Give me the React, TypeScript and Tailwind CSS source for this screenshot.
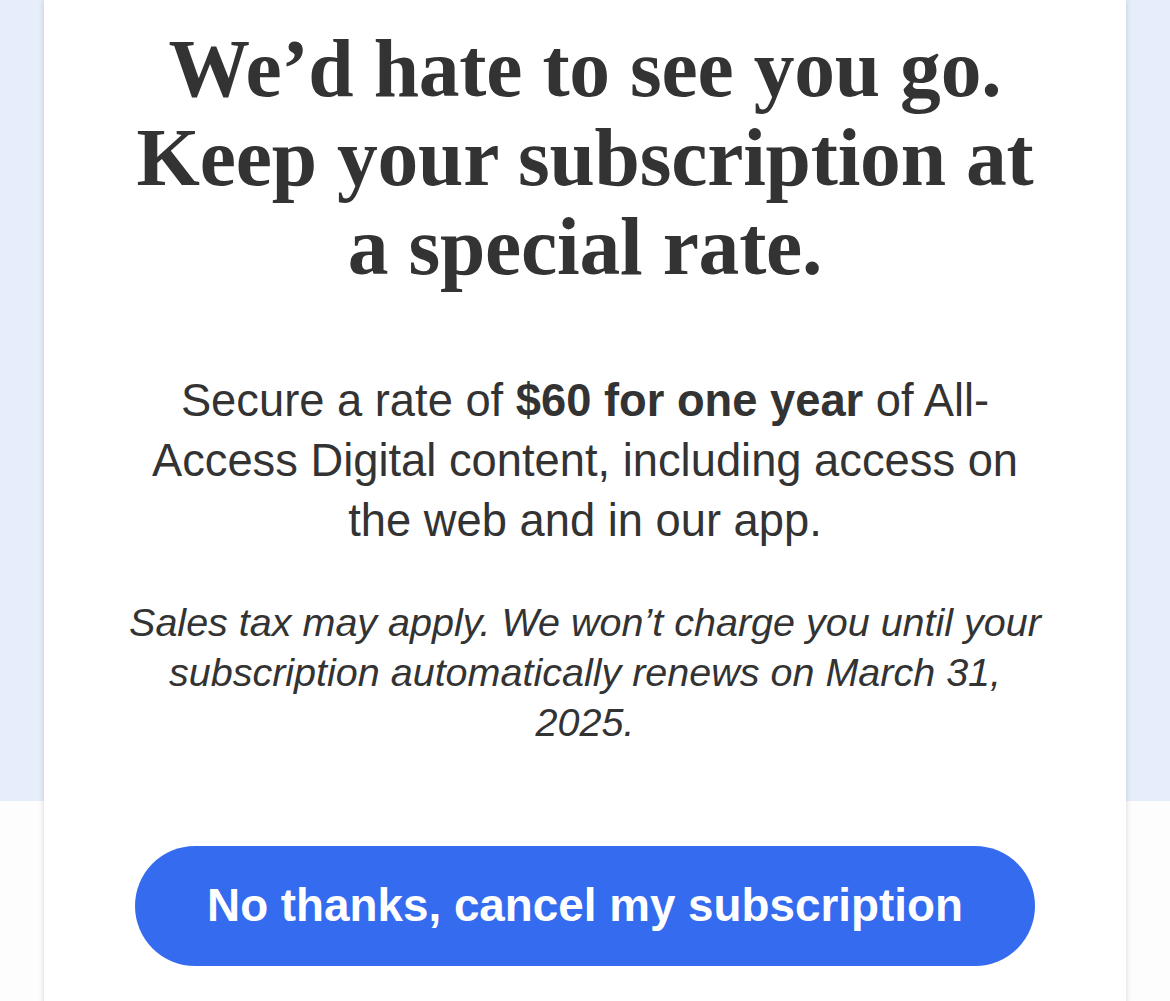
export default function App() {
  return (
    <div className="min-h-[1001px] w-full bg-[linear-gradient(to_bottom,#e6edfb_0px,#e6edfb_801px,#fdfdfd_801px,#fdfdfd_100%)]">
      <div className="mx-auto w-[1082px] min-h-[1001px] bg-white shadow-[0_0_6px_rgba(0,0,0,0.16)] px-[91px] pt-[24px] pb-[40px] text-[#333333]">
        <h1 className="-mx-[20px] text-center font-['Liberation_Serif',serif] font-bold text-[81.5px] leading-[89px] tracking-[-0.2px] whitespace-nowrap">
          We’d hate to see you go.
          <br />
          Keep your subscription at
          <br />
          a special rate.
        </h1>

        <p className="mt-[80px] text-center font-['Liberation_Sans',Arial,sans-serif] text-[45.3px] leading-[60px] text-[#333333]">
          Secure a rate of <span className="font-bold">$60 for one year</span> of All-
          <br />
          Access Digital content, including access on
          <br />
          the web and in our app.
        </p>

        <p className="-mx-[20px] mt-[46px] text-center font-['Liberation_Sans',Arial,sans-serif] italic text-[39.5px] leading-[50px] text-[#333333] whitespace-nowrap">
          Sales tax may apply. We won’t charge you until your
          <br />
          subscription automatically renews on March 31,
          <br />
          2025.
        </p>

        <button
          type="button"
          className="mt-[99px] flex h-[120px] w-full items-center justify-center rounded-full bg-[#356bef] font-['Liberation_Sans',Arial,sans-serif] text-[45.8px] font-bold text-white"
        >
          No thanks, cancel my subscription
        </button>
      </div>
    </div>
  );
}
